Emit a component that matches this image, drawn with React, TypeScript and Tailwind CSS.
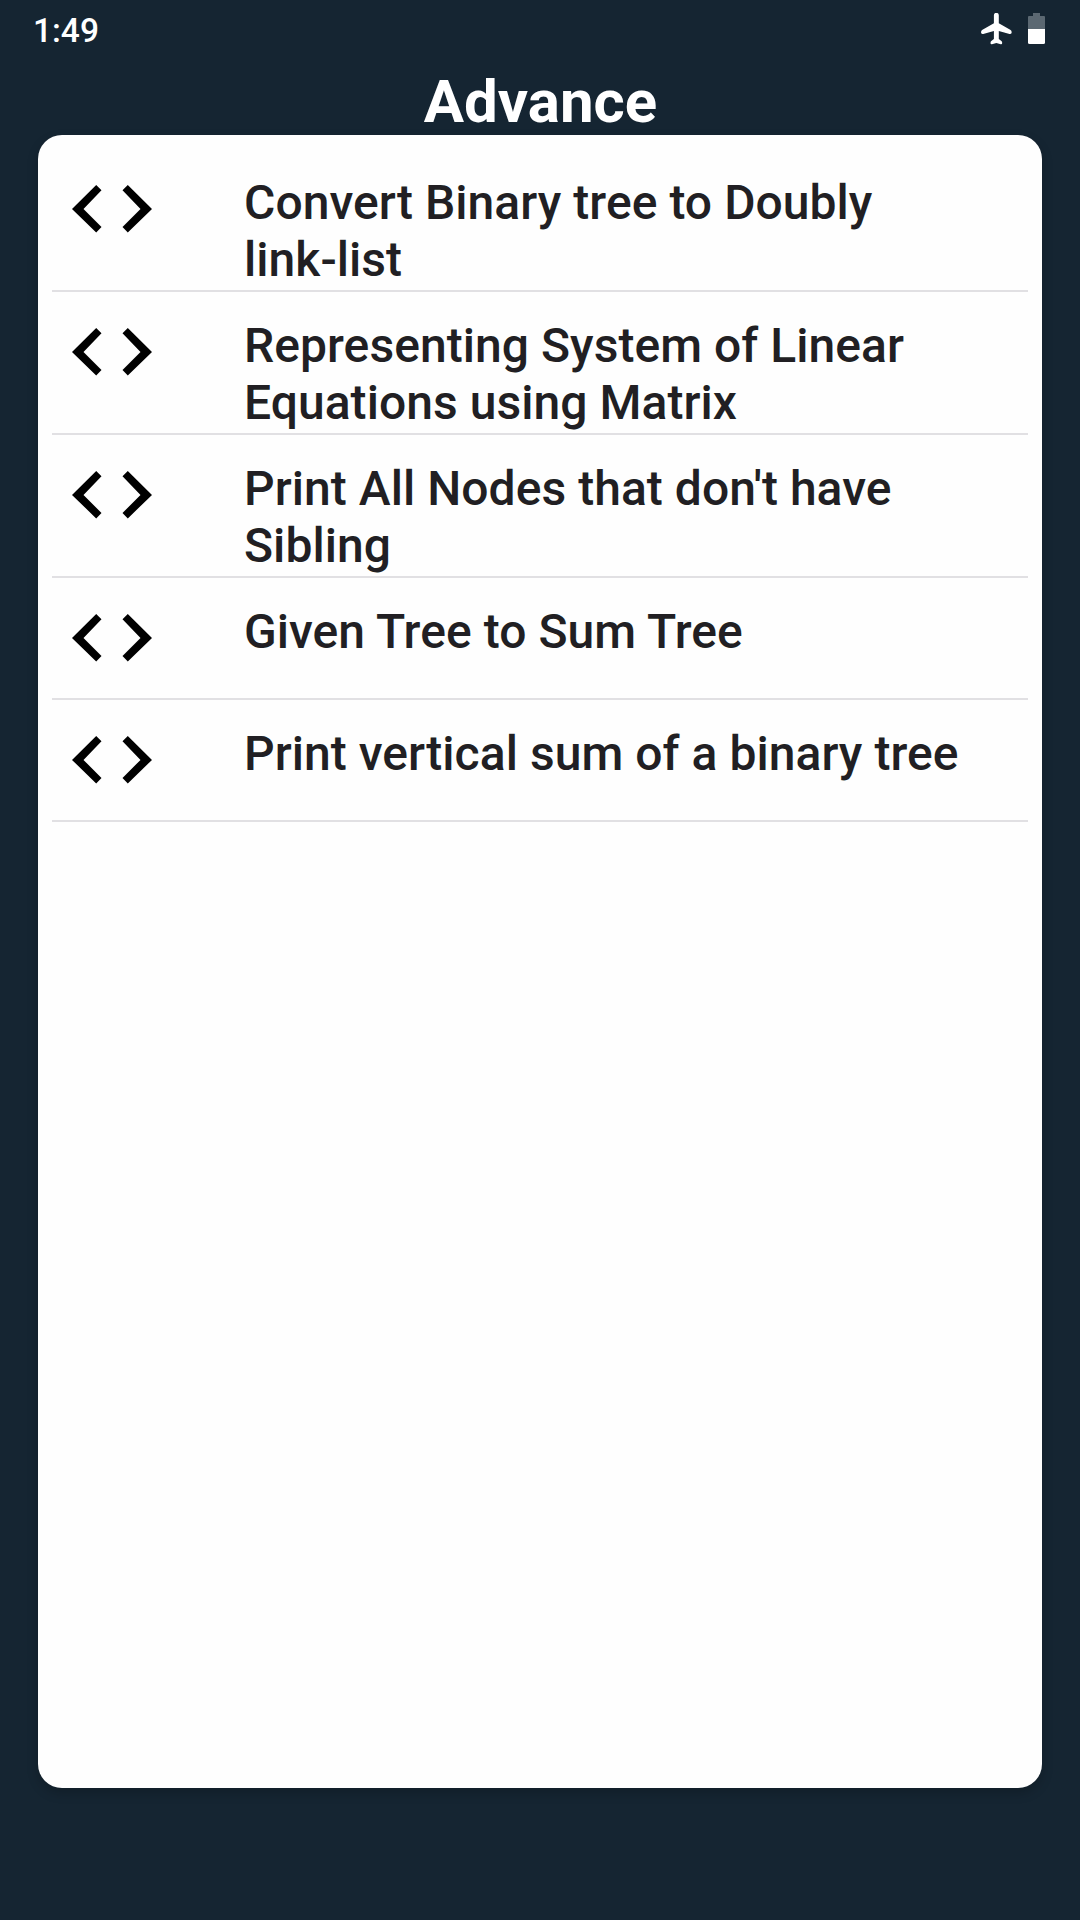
const problems = [
  { id: 1, title: 'Convert Binary tree to Doubly link-list' },
  { id: 2, title: 'Representing System of Linear Equations using Matrix' },
  { id: 3, title: "Print All Nodes that don't have Sibling" },
  { id: 4, title: 'Given Tree to Sum Tree' },
  { id: 5, title: 'Print vertical sum of a binary tree' },
];

function CodeIcon() {
  return (
    <svg className="mt-9 w-20 h-12 shrink-0" viewBox="0 0 80 48" fill="#000">
      <path d="M0 23.9L24.2 0l5.3 5.300L11.500 23.900l18 18.100-5.300 5.400z" />
      <path d="M80 23.900L55.800 0l-5.300 5.300 18 18.600-18 18.100 5.300 5.400z" />
    </svg>
  );
}

function AirplaneIcon() {
  return (
    <svg className="w-8 h-8" viewBox="0 0 32 32" fill="#fff">
      <path d="M13.900 2.300a2.450 2.450 0 0 1 4.900 0V10.300l11.400 6.500q1.500.9 1.500 2.500 0 2.200-2.200 1.700l-10.700-2.900v7.800l2.600 2.200q.8.700.8 1.900 0 1.500-1.500 1.200l-4.350-1.200-4.350 1.200q-1.500.3-1.500-1.200 0-1.200.8-1.900l2.600-2.200v-7.800l-10.700 2.900q-2.200.5-2.200-1.700 0-1.600 1.500-2.500l11.400-6.500z" />
    </svg>
  );
}

function BatteryIcon() {
  return (
    <svg className="w-[17px] h-[31px]" viewBox="0 0 17 31">
      <path d="M5 0h7v3h4q1 0 1 1v12H0V4q0-1 1-1h4z" fill="#5b6872" />
      <path d="M0 16h17v13.500q0 1.500-1.500 1.500h-14Q0 31 0 29.500z" fill="#fff" />
    </svg>
  );
}

function StatusBar() {
  return (
    <div className="h-[63px] flex items-start justify-between pl-[33px] pr-[35px] text-white">
      <span className="mt-[11px] text-[33.5px] leading-[40px] font-medium">1:49</span>
      <div className="mt-[13px] flex items-start gap-4">
        <AirplaneIcon />
        <BatteryIcon />
      </div>
    </div>
  );
}

export default function App() {
  return (
    <div className="w-[1080px] h-[1920px] flex flex-col bg-[#152532] font-['Roboto',sans-serif]">
      <StatusBar />

      <h1 className="h-[72px] pt-[4px] pl-px text-center text-white text-[60px] leading-[70px] font-bold">
        Advance
      </h1>

      <div className="mx-[38px] h-[1653px] px-[14px] pt-[14px] bg-[#fefefe] rounded-[24px] shadow-[0_5px_12px_rgba(0,0,0,0.2)]">
        {problems.map((problem) => (
          <div
            key={problem.id}
            className="flex min-h-[122px] pl-5 pb-[2px] border-b-2 border-[#e1e0e3]"
          >
            <CodeIcon />
            <p className="ml-[92px] mt-[25px] w-[730px] text-[48px] leading-[57px] font-medium tracking-[0.05px] text-[#211f23]">
              {problem.title}
            </p>
          </div>
        ))}
      </div>
    </div>
  );
}
